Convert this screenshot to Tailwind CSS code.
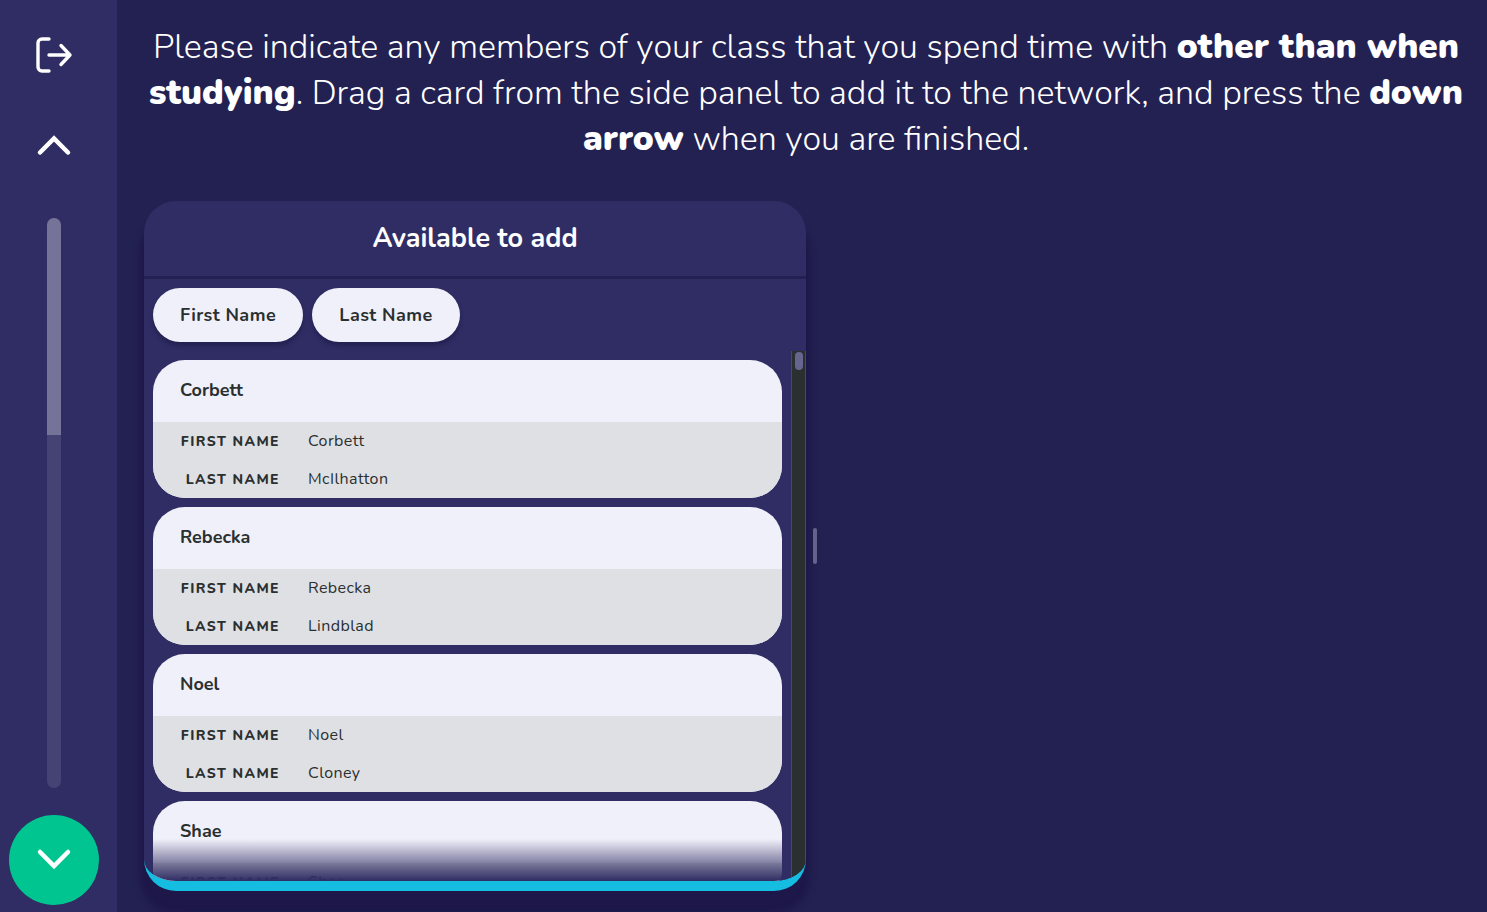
<!DOCTYPE html>
<html lang="en">
<head>
<meta charset="utf-8">
<meta name="viewport" content="width=device-width, initial-scale=1">
<title>Class network</title>
<script src="https://cdn.jsdelivr.net/npm/@tailwindcss/browser@4"></script>
</head>
<body class="flex h-screen overflow-hidden bg-[#232152] font-['Nunito','Lato',sans-serif] text-white">
  <nav aria-label="Interview" class="flex w-[117px] shrink-0 flex-col items-center bg-[#2f2d63] pt-7 pr-[9px] pb-[7px]">
    <button type="button" aria-label="Exit" class="flex size-[54px] items-center justify-center">
      <svg class="size-10" viewBox="0 0 40 40" fill="none" stroke="currentColor" stroke-width="3.4" stroke-linecap="round" stroke-linejoin="round"><path d="M15 4H8a4 4 0 0 0-4 4v24a4 4 0 0 0 4 4h7M15 20h21M27 10.500L36 20L27 29.500"/></svg>
    </button>
    <button type="button" aria-label="Previous" class="mt-9 flex size-[54px] items-center justify-center">
      <svg class="size-10" viewBox="0 0 40 40" fill="none" stroke="currentColor" stroke-width="4.500" stroke-linecap="round" stroke-linejoin="miter"><path d="M6 27.500L20 13.500L34 27.500"/></svg>
    </button>
    <div role="progressbar" aria-label="Progress" aria-valuenow="38" aria-valuemin="0" aria-valuemax="100" class="mt-[46px] w-[14px] flex-1 overflow-hidden rounded-full bg-[#454373]">
      <div class="bg-[#757397]" style="height:38%"></div>
    </div>
    <button type="button" aria-label="Next" class="mt-[27px] flex size-[90px] items-center justify-center rounded-full bg-[#00c591]">
      <svg class="size-10" viewBox="0 0 40 40" fill="none" stroke="currentColor" stroke-width="4.500" stroke-linecap="round" stroke-linejoin="miter"><path d="M6 12L20 26L34 12"/></svg>
    </button>
  </nav>

  <main class="flex min-w-0 flex-1 flex-col px-[27px] pt-6 pb-[21px]">
    <h1 class="-mr-4 -ml-2 text-center text-[34px] leading-[46px] font-light">Please indicate any members of your class that you spend time with <strong class="text-[35px] font-black">other than when studying</strong>. Drag a card from the side panel to add it to the network, and press the <strong class="text-[35px] font-black">down arrow</strong> when you are finished.</h1>

    <div class="mt-[39px] flex min-h-0 flex-1 items-center gap-[7px]">
      <section aria-labelledby="panel-title" class="flex h-full w-[calc(50%+4px)] flex-col overflow-hidden rounded-[32px] border-b-[10px] border-[#15bde0] bg-[#2f2d63] shadow-[0_18px_6px_4px_#1d1849]">
        <h2 id="panel-title" class="border-b-[3px] border-[#232152] py-5 text-center text-[27px] leading-[35px] font-bold">Available to add</h2>
        <div class="flex gap-[9px] p-[9px] text-lg leading-[54px] font-bold tracking-wide text-[#2a2f2f]">
          <button type="button" class="h-[54px] w-[150px] rounded-full bg-[#f0f0fa] shadow-[0_4px_4px_#232152]">First Name</button>
          <button type="button" class="h-[54px] w-[148px] rounded-full bg-[#f0f0fa] shadow-[0_4px_4px_#232152]">Last Name</button>
        </div>
        <div class="relative flex min-h-0 flex-1">
          <ul class="flex min-w-0 flex-1 flex-col gap-[9px] overflow-hidden p-[9px] text-[#2a2f2f]">
            <li class="shrink-0 overflow-hidden rounded-[32px] bg-[#f0f0fa]">
              <h3 class="px-[27px] pb-0.5 text-lg leading-[60px] font-bold">Corbett</h3>
              <dl class="grid grid-cols-[100px_1fr] gap-x-7 bg-[#dfe0e4] px-[27px]">
                <dt class="h-[38px] text-right text-sm leading-10 font-extrabold tracking-widest whitespace-nowrap">FIRST NAME</dt><dd class="text-base leading-[38px] tracking-wide">Corbett</dd>
                <dt class="h-[38px] text-right text-sm leading-10 font-extrabold tracking-widest whitespace-nowrap">LAST NAME</dt><dd class="text-base leading-[38px] tracking-wide">McIlhatton</dd>
              </dl>
            </li>
            <li class="shrink-0 overflow-hidden rounded-[32px] bg-[#f0f0fa]">
              <h3 class="px-[27px] pb-0.5 text-lg leading-[60px] font-bold">Rebecka</h3>
              <dl class="grid grid-cols-[100px_1fr] gap-x-7 bg-[#dfe0e4] px-[27px]">
                <dt class="h-[38px] text-right text-sm leading-10 font-extrabold tracking-widest whitespace-nowrap">FIRST NAME</dt><dd class="text-base leading-[38px] tracking-wide">Rebecka</dd>
                <dt class="h-[38px] text-right text-sm leading-10 font-extrabold tracking-widest whitespace-nowrap">LAST NAME</dt><dd class="text-base leading-[38px] tracking-wide">Lindblad</dd>
              </dl>
            </li>
            <li class="shrink-0 overflow-hidden rounded-[32px] bg-[#f0f0fa]">
              <h3 class="px-[27px] pb-0.5 text-lg leading-[60px] font-bold">Noel</h3>
              <dl class="grid grid-cols-[100px_1fr] gap-x-7 bg-[#dfe0e4] px-[27px]">
                <dt class="h-[38px] text-right text-sm leading-10 font-extrabold tracking-widest whitespace-nowrap">FIRST NAME</dt><dd class="text-base leading-[38px] tracking-wide">Noel</dd>
                <dt class="h-[38px] text-right text-sm leading-10 font-extrabold tracking-widest whitespace-nowrap">LAST NAME</dt><dd class="text-base leading-[38px] tracking-wide">Cloney</dd>
              </dl>
            </li>
            <li class="shrink-0 overflow-hidden rounded-[32px] bg-[#f0f0fa]">
              <h3 class="px-[27px] pb-0.5 text-lg leading-[60px] font-bold">Shae</h3>
              <dl class="grid grid-cols-[100px_1fr] gap-x-7 bg-[#dfe0e4] px-[27px]">
                <dt class="h-[38px] text-right text-sm leading-10 font-extrabold tracking-widest whitespace-nowrap">FIRST NAME</dt><dd class="text-base leading-[38px] tracking-wide">Shae</dd>
              </dl>
            </li>
          </ul>
          <div class="pointer-events-none absolute right-[15px] bottom-0 left-0 h-[42px] bg-linear-to-b from-[#2f2d63]/0 to-[#2f2d63]"></div>
          <div aria-hidden="true" class="flex w-[15px] shrink-0 justify-center border-r border-l border-r-[#4a4d4d] border-l-[#454870] bg-[#2a2f2f] pt-px">
            <div class="h-[18px] w-2 rounded-full bg-[#67658f]"></div>
          </div>
        </div>
      </section>
      <div role="separator" aria-orientation="vertical" aria-label="Resize panel" class="z-10 h-9 w-1 rounded-full bg-[#65638a]"></div>
    </div>
  </main>
</body>
</html>
